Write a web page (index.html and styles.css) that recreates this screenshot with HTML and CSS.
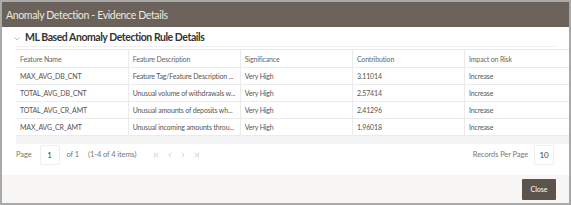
FILE: index.html
```html
<!DOCTYPE html>
<html lang="en">
<head>
  <meta charset="UTF-8">
  <meta name="viewport" content="width=device-width, initial-scale=1.0">
  <title>Anomaly Detection - Evidence Details</title>
  <link rel="stylesheet" href="styles.css">
</head>
<body>
  <div class="dialog">
    <div class="titlebar">Anomaly Detection - Evidence Details</div>

    <div class="content">
      <div class="section-head">
        <svg class="chevron" width="6" height="4" viewBox="0 0 6 4"><path d="M0.5 0.5 L3 3 L5.5 0.5" fill="none" stroke="#b5b5b5" stroke-width="0.9"/></svg>
        <span>ML Based Anomaly Detection Rule Details</span>
      </div>

      <table class="grid">
        <thead>
          <tr>
            <th>Feature Name</th>
            <th>Feature Description</th>
            <th>Significance</th>
            <th>Contribution</th>
            <th>Impact on Risk</th>
          </tr>
        </thead>
        <tbody>
          <tr>
            <td>MAX_AVG_DB_CNT</td>
            <td>Feature Tag/Feature Description ...</td>
            <td>Very High</td>
            <td>3.11014</td>
            <td>Increase</td>
          </tr>
          <tr>
            <td>TOTAL_AVG_DB_CNT</td>
            <td>Unusual volume of withdrawals w...</td>
            <td>Very High</td>
            <td>2.57414</td>
            <td>Increase</td>
          </tr>
          <tr>
            <td>TOTAL_AVG_CR_AMT</td>
            <td>Unusual amounts of deposits wh...</td>
            <td>Very High</td>
            <td>2.41296</td>
            <td>Increase</td>
          </tr>
          <tr>
            <td>MAX_AVG_CR_AMT</td>
            <td>Unusual incoming amounts throu...</td>
            <td>Very High</td>
            <td>1.96018</td>
            <td>Increase</td>
          </tr>
        </tbody>
      </table>
      <div class="grid-bottom"></div>

      <div class="pager">
        <div class="pager-left">
          <span>Page</span>
          <span class="box">1</span>
          <span>of 1</span>
          <span class="items">(1-4 of 4 items)</span>
          <span class="nav">
            <svg width="6" height="6" viewBox="0 0 6 6"><path d="M0.8 0.5 V5.5 M4.5 0.8 L2.3 3 L4.5 5.2" fill="none" stroke="#c2c2c2" stroke-width="0.8"/></svg>
            <svg width="6" height="6" viewBox="0 0 6 6"><path d="M4 0.8 L1.8 3 L4 5.2" fill="none" stroke="#c2c2c2" stroke-width="0.8"/></svg>
            <svg width="6" height="6" viewBox="0 0 6 6"><path d="M2 0.8 L4.2 3 L2 5.2" fill="none" stroke="#c2c2c2" stroke-width="0.8"/></svg>
            <svg width="6" height="6" viewBox="0 0 6 6"><path d="M1.5 0.8 L3.7 3 L1.5 5.2 M5.2 0.5 V5.5" fill="none" stroke="#c2c2c2" stroke-width="0.8"/></svg>
          </span>
        </div>
        <div class="pager-right">
          <span>Records Per Page</span>
          <span class="box">10</span>
        </div>
      </div>
    </div>

    <div class="footer">
      <button class="btn-close">Close</button>
    </div>
  </div>
</body>
</html>
```

FILE: styles.css
```css
body {
  margin: 0;
  font-family: Lato, "Open Sans", sans-serif;
  background-color: #ffffff;
}
.dialog {
  width: 571px;
  height: 205px;
  box-sizing: border-box;
  border: 2px solid #a9a9a9;
  display: flex;
  flex-direction: column;
  background-color: #ffffff;
}
.titlebar {
  height: 25px;
  flex: none;
  background-color: #6a625b;
  color: #efe8de;
  font-size: 10.5px;
  letter-spacing: -0.35px;
  display: flex;
  align-items: center;
  padding-left: 4px;
}
.content {
  flex: 1;
  padding-left: 14px;
}
.section-head {
  height: 19px;
  display: flex;
  align-items: center;
  margin-right: 13px;
  border-bottom: 1px solid #f0f0f0;
  font-size: 10.5px;
  font-weight: bold;
  color: #333333;
  letter-spacing: -0.45px;
}
.chevron {
  margin: 4px 5px 0 -2px;
}
.grid {
  width: 100%;
  border-collapse: collapse;
  margin-top: 2px;
  font-size: 7px;
  letter-spacing: -0.15px;
  color: #555555;
  table-layout: fixed;
}
.grid th, .grid td {
  text-align: left;
  font-weight: normal;
  padding: 0 4px;
  height: 16px;
  border-bottom: 1px solid #ebebeb;
  border-left: 1px solid #ebebeb;
  white-space: nowrap;
  overflow: hidden;
}
.grid th:first-child, .grid td:first-child {
  border-left: none;
}
.grid th {
  height: 17px;
  border-top: 1px solid #ebebeb;
  color: #666666;
}
.grid th:nth-child(5), .grid td:nth-child(5) {
  width: 96px;
}
.grid-bottom {
  height: 8px;
  background-color: #f4f4f4;
}
.pager {
  display: flex;
  justify-content: space-between;
  align-items: center;
  height: 21px;
  margin-right: 15px;
  font-size: 7.5px;
  letter-spacing: -0.1px;
  color: #777777;
}
.pager-left, .pager-right {
  display: flex;
  align-items: center;
  gap: 6px;
}
.box {
  display: inline-flex;
  align-items: center;
  justify-content: center;
  width: 18px;
  height: 18px;
  border: 1px solid #eeeeee;
  border-radius: 2px;
  color: #444444;
  font-size: 8px;
}
.pager-left .box {
  margin: 0 1px 0 2px;
}
.items {
  margin-left: 3px;
}
.nav {
  display: flex;
  gap: 7px;
  margin-left: 12px;
}
.footer {
  height: 28px;
  flex: none;
  background-color: #f7f6f4;
  display: flex;
  justify-content: flex-end;
  align-items: center;
  padding-right: 13px;
}
.btn-close {
  width: 34px;
  height: 21px;
  border: none;
  border-radius: 1px;
  background-color: #5d534d;
  color: #ffffff;
  font-family: Lato, sans-serif;
  font-size: 7px;
  padding: 0;
}
```
